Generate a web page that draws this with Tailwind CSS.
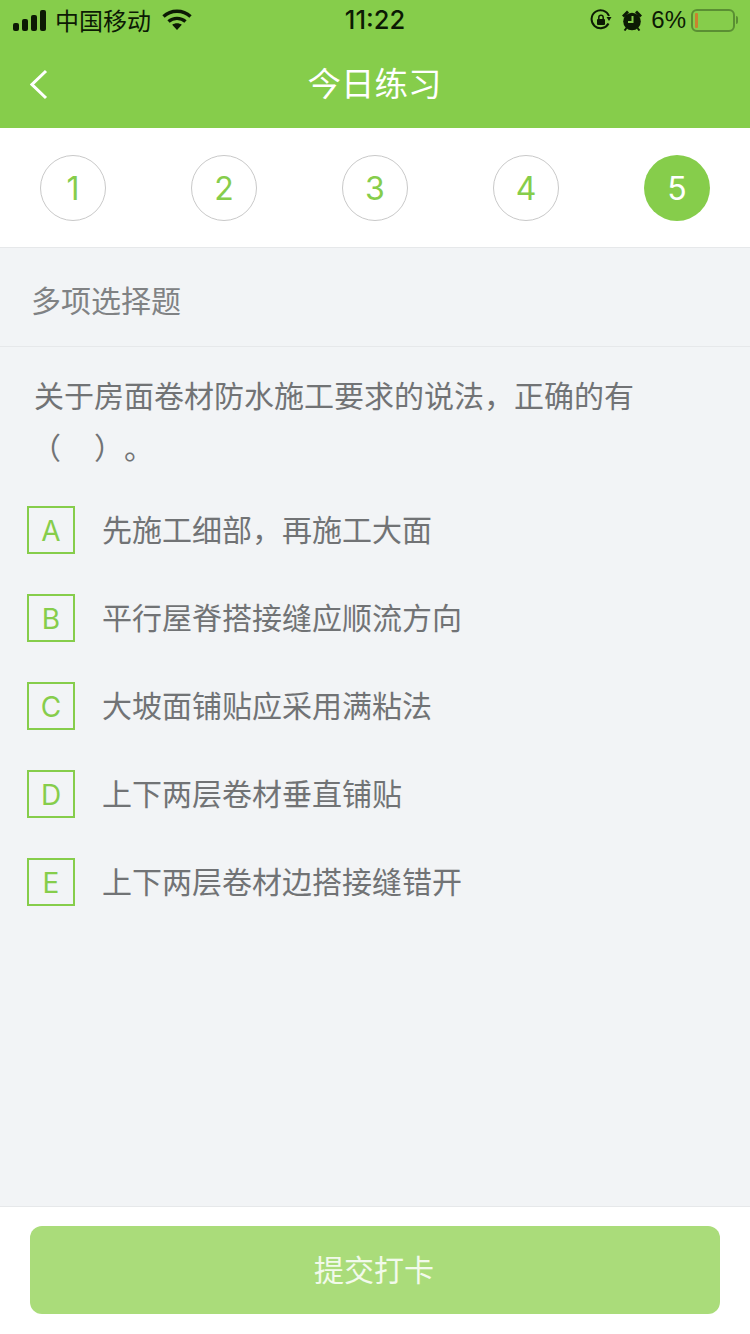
<!DOCTYPE html>
<html lang="zh">
  <head>
    <meta charset="utf-8" />
    <title>今日练习</title>
    <script src="https://cdn.jsdelivr.net/npm/@tailwindcss/browser@4"></script>
  </head>
  <body>
    <div class="w-[750px] h-[1334px] flex flex-col bg-[#f2f4f6] font-['Noto_Sans_CJK_SC',sans-serif] overflow-hidden">
      <!-- Header -->
      <div class="h-[128px] bg-[#86cd4b] shrink-0">
        <!-- Status bar -->
        <div class="h-[40px] relative flex items-center justify-between text-[#0c1a04]">
          <div class="flex items-center pl-[13px]">
            <svg width="34" height="21" viewBox="0 0 34 21" fill="#0c1a04">
              <rect x="0" y="13" width="6" height="8" rx="2" />
              <rect x="9" y="9" width="6" height="12" rx="2" />
              <rect x="18" y="5" width="6" height="16" rx="2" />
              <rect x="27" y="0" width="6" height="21" rx="2" />
            </svg>
            <span class="ml-[8px] text-[24px] leading-[30px]">中国移动</span>
            <svg class="ml-[11px]" width="30" height="22" viewBox="0 0 30 22" fill="none" stroke="#0c1a04" stroke-width="3.4">
              <path d="M1.5 7.5c7.5-7 19.5-7 27 0" />
              <path d="M6.5 12.5c4.700-4.200 12.300-4.200 17 0" />
              <path d="M15 21l-4.800-5.200c2.700-2 6.900-2 9.600 0z" fill="#0c1a04" stroke="none" />
            </svg>
          </div>
          <span class="absolute left-0 right-0 text-center text-[25.5px] leading-[30px] font-medium font-['Inter',sans-serif]">11:22</span>
          <div class="flex items-center pr-[12px]">
            <svg width="22" height="22" viewBox="0 0 22 22" fill="none" stroke="#0c1a04" stroke-width="2">
              <path d="M18.500 14.500A9 9 0 1 1 19 7" />
              <path d="M21.500 8l-2.500 4-2.500-4z" fill="#0c1a04" stroke="none" />
              <rect x="7" y="10" width="8" height="6" rx="1" fill="#0c1a04" stroke="none" />
              <path d="M8.800 10V8.400a2.200 2.200 0 0 1 4.400 0V10" stroke-width="1.500" />
            </svg>
            <svg class="ml-[10px]" width="20" height="21" viewBox="0 0 20 21" fill="#0c1a04">
              <circle cx="10" cy="11.500" r="8.800" />
              <path d="M0 5.500L5 0.500l2 2L2 7.500zM20 5.500L15 0.500l-2 2L18 7.500z" />
              <path d="M4.500 18l-2 2.500M15.500 18l2 2.500" stroke="#0c1a04" stroke-width="2" />
              <path d="M10.500 6v6H6" fill="none" stroke="#86cd4b" stroke-width="2" />
            </svg>
            <span class="ml-[9px] text-[24px] leading-[30px] font-['Liberation_Sans',sans-serif]">6%</span>
            <div class="ml-[5px] w-[44px] h-[23px] rounded-[6px] border-2 border-[#5a8f33] flex items-center pl-[2px]">
              <div class="w-[3px] h-[15px] rounded-[1px] bg-[#c9822f]"></div>
            </div>
            <div class="ml-[1px] w-[2px] h-[8px] rounded-r-[2px] bg-[#5a8f33]"></div>
          </div>
        </div>
        <!-- Nav bar -->
        <div class="h-[88px] relative flex items-center justify-center">
          <svg class="absolute left-[30px] top-[29px]" width="18" height="31" viewBox="0 0 18 31" fill="none" stroke="#ffffff" stroke-width="3">
            <path d="M16 2L2 15.500 16 29" />
          </svg>
          <span class="text-[33.5px] leading-[44px] text-white pb-[4px] pr-[1px]">今日练习</span>
        </div>
      </div>

      <!-- Step circles -->
      <div class="h-[120px] bg-white border-b border-[#e6e8ea] shrink-0 flex items-center justify-between px-[40px] pt-[1px] font-['Inter',sans-serif] text-[32px] text-[#86cd4b]">
        <div class="w-[66px] h-[66px] rounded-full border border-[#c9c9c9] pt-[2px] flex items-center justify-center">1</div>
        <div class="w-[66px] h-[66px] rounded-full border border-[#c9c9c9] pt-[2px] flex items-center justify-center">2</div>
        <div class="w-[66px] h-[66px] rounded-full border border-[#c9c9c9] pt-[2px] flex items-center justify-center">3</div>
        <div class="w-[66px] h-[66px] rounded-full border border-[#c9c9c9] pt-[2px] flex items-center justify-center">4</div>
        <div class="w-[66px] h-[66px] rounded-full bg-[#86cd4b] text-white pt-[2px] flex items-center justify-center">5</div>
      </div>

      <!-- Question type -->
      <div class="h-[99px] border-b border-[#e6e8ea] shrink-0 flex items-center pl-[31px] pt-[4px] text-[30px] text-[#808284]">多项选择题</div>

      <!-- Question -->
      <div class="flex-1 px-[34px] pt-[21px]">
        <p class="text-[30px] leading-[52px] text-[#717375] w-[610px]">关于房面卷材防水施工要求的说法，正确的有<br /><span class="-ml-[3px]">（</span><span class="inline-block w-[33px]"></span>）<span class="inline-block w-0"></span>。</p>
        <div class="mt-[34px] -ml-[7px] flex flex-col gap-[40px] text-[30px] text-[#717375]">
          <div class="flex items-center h-[48px]">
            <div class="w-[48px] h-[48px] border-2 border-[#86cd4b] text-[#86cd4b] text-[28px] pt-[2px] font-['Inter',sans-serif] flex items-center justify-center">A</div>
            <span class="ml-[27px] mb-[4px]">先施工细部，再施工大面</span>
          </div>
          <div class="flex items-center h-[48px]">
            <div class="w-[48px] h-[48px] border-2 border-[#86cd4b] text-[#86cd4b] text-[28px] pt-[2px] font-['Inter',sans-serif] flex items-center justify-center">B</div>
            <span class="ml-[27px] mb-[4px]">平行屋脊搭接缝应顺流方向</span>
          </div>
          <div class="flex items-center h-[48px]">
            <div class="w-[48px] h-[48px] border-2 border-[#86cd4b] text-[#86cd4b] text-[28px] pt-[2px] font-['Inter',sans-serif] flex items-center justify-center">C</div>
            <span class="ml-[27px] mb-[4px]">大坡面铺贴应采用满粘法</span>
          </div>
          <div class="flex items-center h-[48px]">
            <div class="w-[48px] h-[48px] border-2 border-[#86cd4b] text-[#86cd4b] text-[28px] pt-[2px] font-['Inter',sans-serif] flex items-center justify-center">D</div>
            <span class="ml-[27px] mb-[4px]">上下两层卷材垂直铺贴</span>
          </div>
          <div class="flex items-center h-[48px]">
            <div class="w-[48px] h-[48px] border-2 border-[#86cd4b] text-[#86cd4b] text-[28px] pt-[2px] font-['Inter',sans-serif] flex items-center justify-center">E</div>
            <span class="ml-[27px] mb-[4px]">上下两层卷材边搭接缝错开</span>
          </div>
        </div>
      </div>

      <!-- Submit -->
      <div class="h-[128px] bg-white border-t border-[#e6e8ea] shrink-0 px-[30px] pt-[19px]">
        <div class="h-[88px] rounded-[12px] bg-[#aadc7a] text-white/85 text-[30px] pb-[4px] pr-[2px] flex items-center justify-center">提交打卡</div>
      </div>
    </div>
  </body>
</html>
